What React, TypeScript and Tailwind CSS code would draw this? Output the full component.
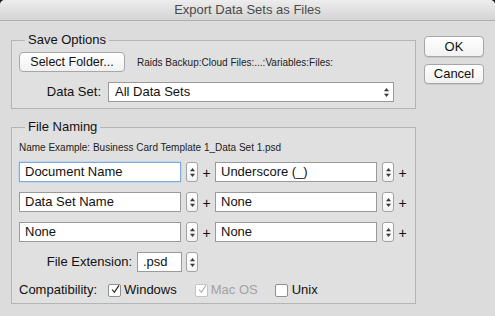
import React from "react";

const Stepper = () => (
  <div className="w-[12px] h-[20px] rounded-[3px] border border-[#a3a3a3] bg-gradient-to-b from-white to-[#f3f3f3] flex items-center justify-center shrink-0">
    <svg width="5" height="9" viewBox="0 0 5 9">
      <polygon points="2.5,0 5,3.2 0,3.2" fill="#3a3a3a" />
      <polygon points="0,5.8 5,5.8 2.5,9" fill="#3a3a3a" />
    </svg>
  </div>
);

const Field = ({ value, focused = false, w = "w-[162px]" }: { value: string; focused?: boolean; w?: string }) => (
  <div
    className={`${w} h-[20px] bg-white border flex items-center pl-[5px] text-[13px] text-[#111] shrink-0 ${
      focused ? "border-[#7fa8d8] shadow-[0_0_0_1px_#c3d7ee]" : "border-[#9a9a9a]"
    }`}
  >
    {value}
  </div>
);

const Plus = () => (
  <div className="w-[17px] h-[20px] flex items-center justify-center text-[14px] text-[#111] shrink-0 pt-[2px]">+</div>
);

const Check = ({ checked, disabled = false }: { checked: boolean; disabled?: boolean }) => (
  <div
    className={`w-[13px] h-[13px] rounded-[2px] border bg-white flex items-center justify-center shrink-0 ${
      disabled ? "border-[#c4c4c4]" : "border-[#8f8f8f]"
    }`}
  >
    {checked && (
      <svg width="13" height="13" viewBox="0 0 13 13" className="-mt-[2px] ml-[2px]">
        <path d="M1.5 6.5 L4.8 10.5 L11.5 0.5" fill="none" stroke={disabled ? "#b0b0b0" : "#222"} strokeWidth="1.7" />
      </svg>
    )}
  </div>
);

const NameRow = ({ a, b, focused = false }: { a: string; b: string; focused?: boolean }) => (
  <div className="flex items-center">
    <Field value={a} focused={focused} />
    <div className="w-[5px]" />
    <Stepper />
    <Plus />
    <Field value={b} />
    <div className="w-[5px]" />
    <Stepper />
    <Plus />
  </div>
);

const Btn = ({ label, className }: { label: string; className: string }) => (
  <div
    className={`${className} w-[60px] rounded-[4px] border border-[#a6a6a6] bg-gradient-to-b from-white to-[#f1f1f1] shadow-[0_1px_0_rgba(0,0,0,0.08)] flex items-center justify-center text-[13px] text-[#111]`}
  >
    {label}
  </div>
);

export default function App() {
  return (
    <div className="w-[495px] h-[316px] bg-[#1a1a1a] overflow-hidden font-['Liberation_Sans',Arial,sans-serif]">
      <div className="w-full h-full rounded-t-[5px] overflow-hidden bg-[#dcdcdc] flex flex-col">
        <div className="h-[21px] shrink-0 bg-gradient-to-b from-[#ededed] to-[#d4d4d4] border-b border-[#b2b2b2] flex items-center justify-center text-[13px] text-[#4a4a4a]">
          Export Data Sets as Files
        </div>
        <div className="flex pl-[11px] pt-[11px]">
          <div className="w-[405px] flex flex-col">
            <fieldset className="border border-[#b4b4b4] bg-[#e0e0e0] pl-[7px] pb-[6px]">
              <legend className="ml-[6px] px-[3px] text-[13px] leading-[16px] text-[#111]">Save Options</legend>
              <div className="flex items-center mt-[4px]">
                <div className="w-[106px] h-[20px] rounded-[4px] border border-[#a6a6a6] bg-gradient-to-b from-white to-[#f1f1f1] flex items-center justify-center text-[12.5px] text-[#111]">
                  Select Folder...
                </div>
                <div className="ml-[12px] text-[10px] text-[#222]">Raids Backup:Cloud Files:...:Variables:Files:</div>
              </div>
              <div className="flex items-center mt-[10px]">
                <div className="w-[82px] text-right text-[13px] text-[#111]">Data Set:</div>
                <div className="ml-[7px] w-[286px] h-[20px] bg-white border border-[#9a9a9a] flex items-center justify-between pl-[6px] pr-[4px] text-[13px] text-[#111]">
                  <span>All Data Sets</span>
                  <svg width="5" height="9" viewBox="0 0 5 9">
                    <polygon points="2.5,0 5,3.2 0,3.2" fill="#3a3a3a" />
                    <polygon points="0,5.8 5,5.8 2.5,9" fill="#3a3a3a" />
                  </svg>
                </div>
              </div>
            </fieldset>

            <fieldset className="mt-[10px] border border-[#b4b4b4] bg-[#e0e0e0] pl-[7px] pb-[5px]">
              <legend className="ml-[6px] px-[3px] text-[13px] leading-[16px] text-[#111]">File Naming</legend>
              <div className="mt-[7px] text-[10px] leading-[12px] text-[#222]">
                Name Example: Business Card Template 1_Data Set 1.psd
              </div>
              <div className="mt-[8px] flex flex-col gap-[10px]">
                <NameRow a="Document Name" b="Underscore (_)" focused />
                <NameRow a="Data Set Name" b="None" />
                <NameRow a="None" b="None" />
                <div className="flex items-center">
                  <div className="w-[113px] text-right text-[13px] text-[#111]">File Extension:</div>
                  <div className="w-[5px]" />
                  <Field value=".psd" w="w-[45px]" />
                  <div className="w-[4px]" />
                  <Stepper />
                </div>
              </div>
              <div className="mt-[10px] h-[16px] flex items-center text-[13px]">
                <div className="w-[89px] text-[#111]">Compatibility:</div>
                <Check checked />
                <div className="ml-[3px] text-[#111]">Windows</div>
                <div className="ml-[18px]">
                  <Check checked disabled />
                </div>
                <div className="ml-[3px] text-[#a3a3a3]">Mac OS</div>
                <div className="ml-[17px]">
                  <Check checked={false} />
                </div>
                <div className="ml-[4px] text-[#111]">Unix</div>
              </div>
            </fieldset>
          </div>
          <div className="ml-[8px] flex flex-col">
            <Btn label="OK" className="mt-[4px] h-[21px]" />
            <Btn label="Cancel" className="mt-[7px] h-[20px]" />
          </div>
        </div>
      </div>
    </div>
  );
}
